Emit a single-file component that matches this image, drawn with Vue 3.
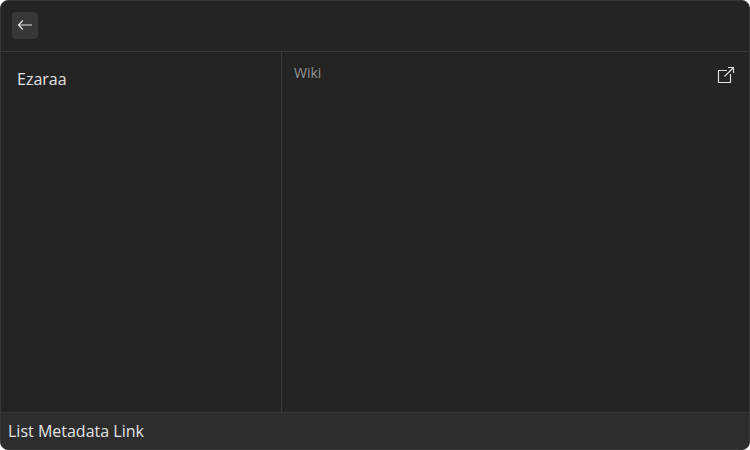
<script setup>
const item = 'Ezaraa'
const field = 'Wiki'
const title = 'List Metadata Link'
</script>

<template>
  <main class="window">
    <header class="toolbar">
      <button class="back" aria-label="Back">
        <svg width="16" height="16" viewBox="0 0 16 16">
          <path d="M15 8H1.700M5.800 3.500L1.500 8l4.300 4.500" />
        </svg>
      </button>
    </header>
    <section class="content">
      <nav class="list">{{ item }}</nav>
      <article class="detail">
        <span class="label">{{ field }}</span>
        <svg class="open" width="18" height="18" viewBox="0 0 18 18">
          <path d="M10 4.500h-8.500v12h12v-8.500M11 1.500h5.500v5.500M16.500 1.500L7.500 10.500" />
        </svg>
      </article>
    </section>
    <footer class="footer">{{ title }}</footer>
  </main>
</template>

<style>
body {
  background: #fff;
}
</style>

<style scoped>
.window {
  box-sizing: border-box;
  height: 450px;
  display: flex;
  flex-direction: column;
  overflow: hidden;
  border: 1px solid #383838;
  border-radius: 8px;
  background: #242424;
  color: #e2e2e2;
  font: 16px/24px "Open Sans", "Noto Sans", sans-serif;
}
.toolbar {
  box-sizing: border-box;
  height: 51px;
  padding: 11px;
  border-bottom: 1px solid #383838;
}
.back {
  box-sizing: border-box;
  display: flex;
  align-items: flex-start;
  justify-content: center;
  width: 26px;
  height: 27px;
  padding: 5px 0 0;
  border: 0;
  border-radius: 4px;
  background: #383838;
}
svg {
  fill: none;
  stroke: #e2e2e2;
  stroke-width: 1.2;
}
.content {
  display: flex;
  flex: 1;
}
.list {
  box-sizing: border-box;
  width: 281px;
  padding: 15px 16px;
  border-right: 1px solid #383838;
}
.detail {
  flex: 1;
  display: flex;
  justify-content: space-between;
  align-items: flex-start;
  padding: 11px 14px 0 12px;
}
.label {
  color: #929292;
  font-size: 14px;
  line-height: 20px;
}
.open {
  margin-top: 3px;
  stroke-width: 1.15;
}
.footer {
  box-sizing: border-box;
  height: 37px;
  padding: 6px 7px;
  border-top: 1px solid #383838;
  background: #2d2d2d;
}
</style>
